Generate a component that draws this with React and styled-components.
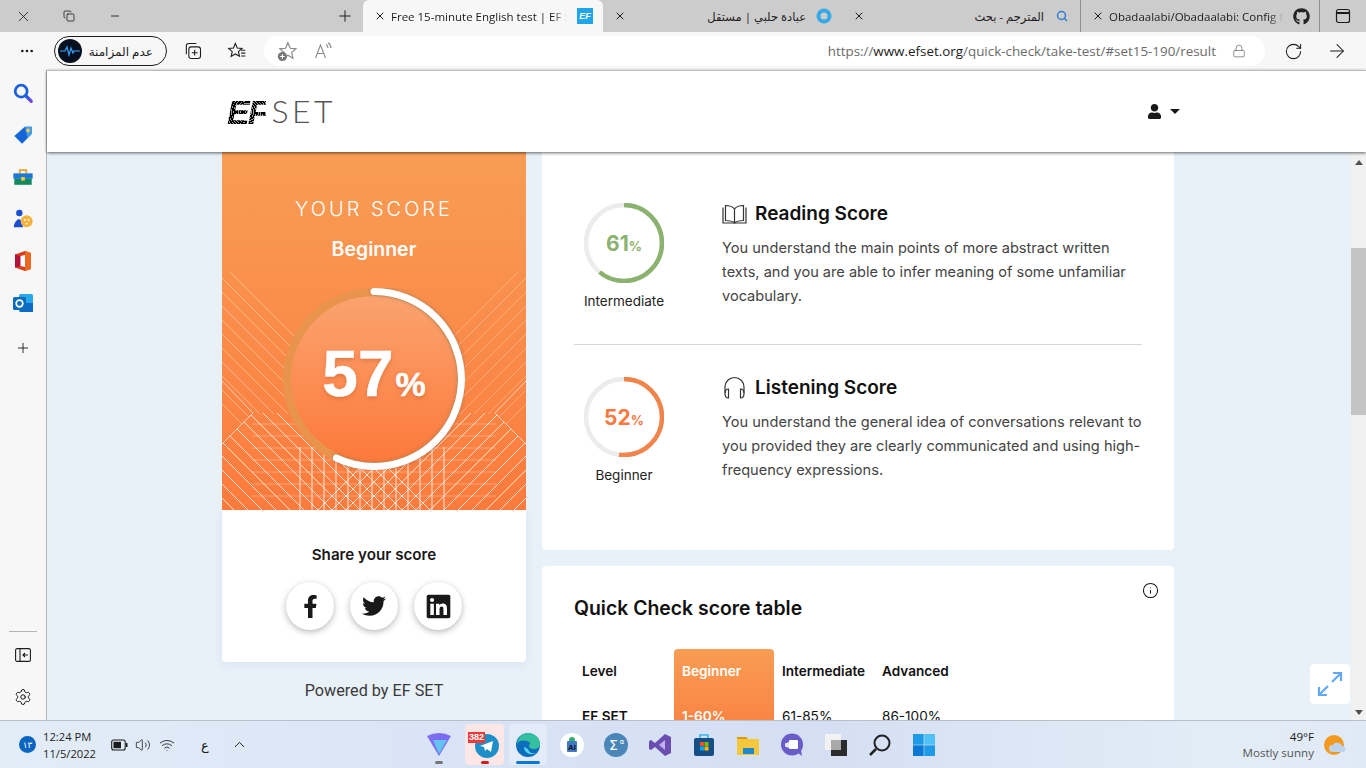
import React from 'react';
import styled, { createGlobalStyle } from 'styled-components';
import { X, Copy, Minus, Plus, MoreHorizontal, Lock, RotateCw, ArrowRight, Settings, ChevronUp, Volume2, Wifi, Search, Info } from 'lucide-react';
import { FaFacebookF, FaTwitter, FaLinkedin, FaGithub, FaUser } from 'react-icons/fa';

const GlobalStyle = createGlobalStyle`
  html, body { margin: 0; padding: 0; overflow: hidden; }
  * { box-sizing: border-box; }
`;

const UI_FONT = `"Open Sans", "DejaVu Sans", sans-serif`;
const PAGE_FONT = `Inter, "Noto Sans", sans-serif`;

// browser frame
const Screen = styled.div`
  width: 1366px;
  height: 768px;
  display: flex;
  flex-direction: column;
  overflow: hidden;
  font-family: ${UI_FONT};
  background: #f7f7f7;
`;

const TabStrip = styled.div`
  height: 32px;
  flex: none;
  background: #cccccc;
  display: flex;
  align-items: stretch;
  color: #1c1c1c;
`;

const WinButton = styled.div`
  width: ${(p) => p.$w || 46}px;
  display: flex;
  align-items: center;
  justify-content: center;
`;

const StripSpacer = styled.div`
  flex: 1;
`;

const Tab = styled.div`
  width: ${(p) => (p.$active ? 240 : 239)}px;
  display: flex;
  align-items: center;
  padding: 0 9px 0 10px;
  font-size: 11.5px;
  background: ${(p) => (p.$active ? '#f7f7f7' : 'transparent')};
  border-radius: ${(p) => (p.$active ? '6px 6px 0 0' : '0')};
  border-right: ${(p) => (p.$sep ? '1px solid #8f8f8f' : 'none')};
  background-clip: padding-box;
`;

const TabClose = styled.div`
  width: 14px;
  display: flex;
  justify-content: center;
  flex: none;
`;

const TabTitle = styled.div`
  flex: 1;
  min-width: 0;
  margin: 0 9px 0 4px;
  white-space: nowrap;
  overflow: hidden;
  direction: ${(p) => (p.$rtl ? 'rtl' : 'ltr')};
  text-align: ${(p) => (p.$rtl ? 'right' : 'left')};
  mask-image: ${(p) => (p.$rtl ? 'none' : 'linear-gradient(90deg, #000 92%, transparent)')};
`;

const TabIcon = styled.div`
  width: 18px;
  height: 18px;
  flex: none;
  display: flex;
  align-items: center;
  justify-content: center;
`;

const EfFavicon = styled.div`
  width: 16px;
  height: 16px;
  background: #1ea6e8;
  color: #fff;
  font: italic 700 9px "Liberation Sans", sans-serif;
  display: flex;
  align-items: center;
  justify-content: center;
`;

const Toolbar = styled.div`
  height: 38px;
  flex: none;
  display: flex;
  align-items: center;
  background: #f7f7f7;
  color: #1c1c1c;
`;

const ToolButton = styled.div`
  width: ${(p) => p.$w || 44}px;
  flex: none;
  display: flex;
  align-items: center;
  justify-content: center;
`;

const SyncPill = styled.div`
  width: 113px;
  height: 30px;
  border: 1px solid #1c1c1c;
  border-radius: 15px;
  display: flex;
  align-items: center;
  padding: 0 13px 0 3px;
  justify-content: space-between;
  font-size: 12px;
  flex: none;
`;

const Avatar = styled.div`
  width: 24px;
  height: 24px;
  border-radius: 50%;
  background: #06101f;
  display: flex;
  align-items: center;
  justify-content: center;
`;

const Omnibox = styled.div`
  width: 1001px;
  height: 30px;
  margin-left: 9px;
  flex: none;
  background: #fff;
  border-radius: 15px;
  display: flex;
  align-items: center;
  padding: 0 19px 0 7px;
`;

const UrlText = styled.div`
  flex: 1;
  text-align: right;
  font-size: 13.4px;
  color: #6b6b6b;
  margin-right: 16px;
  white-space: nowrap;
  b { font-weight: 400; color: #1c1c1c; }
`;

const Body = styled.div`
  flex: 1;
  min-height: 0;
  display: flex;
`;

const Sidebar = styled.div`
  width: 47px;
  flex: none;
  background: #f7f7f7;
  border-right: 1px solid #b9b9b9;
  display: flex;
  flex-direction: column;
  align-items: center;
  padding-top: 2px;
`;

const SideIcon = styled.div`
  height: ${(p) => p.$h || 42}px;
  width: 100%;
  flex: none;
  display: flex;
  align-items: center;
  justify-content: center;
`;

const SideFoot = styled.div`
  margin-top: auto;
  width: 100%;
  display: flex;
  flex-direction: column;
  align-items: center;
  padding-bottom: 2px;
`;

const SideRule = styled.div`
  width: 28px;
  height: 1px;
  background: #b5b5b5;
  margin-bottom: 2px;
`;

const Viewport = styled.div`
  flex: 1;
  min-width: 0;
  display: flex;
  flex-direction: column;
  background: #e8f0f8;
  font-family: ${PAGE_FONT};
  position: relative;
`;

// page
const SiteHeader = styled.div`
  height: 82px;
  flex: none;
  background: #fff;
  border-top: 1px solid #bdbdbd;
  box-shadow: 0 1px 3px rgba(0, 0, 0, 0.6);
  display: flex;
  align-items: center;
  justify-content: space-between;
  padding: 0 186px 0 180px;
  position: relative;
  z-index: 2;
`;

const Logo = styled.div`
  display: flex;
  align-items: center;
  gap: 5px;
`;

const LogoMark = styled.span`
  font: italic 900 34px "Liberation Sans", sans-serif;
  letter-spacing: -2px;
  line-height: 1;
  color: transparent;
  background: repeating-radial-gradient(circle at 52% 50%, #000 0 1.6px, #999 1.6px 2.3px);
  background-clip: text;
  -webkit-background-clip: text;
`;

const LogoWord = styled.span`
  font: 300 32px Lato, sans-serif;
  letter-spacing: 3.4px;
  line-height: 1;
  margin-top: -2px;
  color: #555;
`;

const UserMenu = styled.div`
  display: flex;
  align-items: center;
  gap: 8px;
  color: #1a1a1a;
`;

const Caret = styled.div`
  width: 0;
  height: 0;
  border-left: 5px solid transparent;
  border-right: 5px solid transparent;
  border-top: 5px solid #1a1a1a;
`;

const PageRow = styled.div`
  flex: 1;
  min-height: 0;
  display: flex;
`;

const Page = styled.div`
  flex: 1;
  min-width: 0;
  display: flex;
  gap: 16px;
  padding-left: 175px;
  overflow: hidden;
`;

const LeftColumn = styled.div`
  width: 304px;
  flex: none;
`;

const ScorePanel = styled.div`
  height: 358px;
  position: relative;
  overflow: hidden;
  background: linear-gradient(180deg, #f89d55, #fb7b3d);
  color: #fff;
  text-align: center;
  padding-top: 45px;
`;

const Pattern = styled.svg`
  position: absolute;
  left: 0;
  top: 0;
`;

const ScoreLabel = styled.div`
  font-size: 20px;
  font-weight: 300;
  letter-spacing: 3px;
  line-height: 24px;
  position: relative;
`;

const ScoreLevel = styled.div`
  font-size: 19.5px;
  font-weight: 600;
  line-height: 24px;
  margin-top: 16px;
  position: relative;
`;

const BigRing = styled.div`
  width: 182px;
  height: 182px;
  margin: 27px auto 0;
  position: relative;
  display: flex;
  align-items: center;
  justify-content: center;
`;

const RingSvg = styled.svg`
  position: absolute;
  left: 0;
  top: 0;
`;

const BigValue = styled.div`
  position: relative;
  font-family: "Liberation Sans", sans-serif;
  font-weight: 700;
  font-size: 64px;
  line-height: 1;
  -webkit-text-stroke: 0.5px #fff;
  text-shadow: 0 2px 4px rgba(160, 70, 20, 0.35);
  margin-top: -10px;
  span { font-size: 34px; margin-left: 2px; }
`;

const ShareCard = styled.div`
  height: 152px;
  background: #fff;
  border-radius: 0 0 4px 4px;
  box-shadow: 0 2px 10px rgba(120, 140, 170, 0.12);
  text-align: center;
  padding-top: 35px;
`;

const ShareTitle = styled.div`
  font-size: 15.2px;
  font-weight: 600;
  color: #191919;
  line-height: 20px;
`;

const ShareRow = styled.div`
  display: flex;
  justify-content: center;
  gap: 16px;
  margin-top: 17px;
`;

const ShareButton = styled.div`
  width: 48px;
  height: 48px;
  border-radius: 50%;
  background: #fff;
  box-shadow: 0 2px 6px rgba(0, 0, 0, 0.28);
  display: flex;
  align-items: center;
  justify-content: center;
  color: #191919;
`;

const Powered = styled.div`
  text-align: center;
  font: 400 16.2px Roboto, sans-serif;
  color: #3a3a3a;
  margin-top: 19px;
`;

const RightColumn = styled.div`
  width: 632px;
  flex: none;
  display: flex;
  flex-direction: column;
  gap: 16px;
`;

const Card = styled.div`
  background: #fff;
  border-radius: ${(p) => (p.$flat ? '0 0 4px 4px' : '4px')};
  padding: ${(p) => (p.$flat ? '51px 32px 0' : '30px 32px')};
  height: ${(p) => (p.$flat ? '398px' : 'auto')};
  flex: none;
  position: relative;
`;

const SkillRow = styled.div`
  display: flex;
  gap: 48px;
  height: ${(p) => p.$h}px;
`;

const Gauge = styled.div`
  width: 100px;
  flex: none;
  text-align: center;
  font-size: 13.5px;
  color: #222;
`;

const GaugeRing = styled.div`
  width: 80px;
  height: 80px;
  margin: 0 auto 10px;
  position: relative;
  display: flex;
  align-items: center;
  justify-content: center;
  font-weight: 700;
  font-size: 21px;
  color: ${(p) => p.$color};
  span { font-size: 13px; }
`;

const GaugeValue = styled.div`
  position: relative;
`;

const SkillText = styled.div`
  flex: 1;
  min-width: 0;
  margin-top: -1px;
`;

const SkillTitle = styled.div`
  display: flex;
  align-items: center;
  font-size: 19px;
  font-weight: 600;
  color: #111;
  line-height: 24px;
  margin-bottom: 10px;
`;

const TitleIcon = styled.div`
  width: 33px;
  flex: none;
  display: flex;
`;

const SkillBody = styled.div`
  font-size: 14.58px;
  line-height: 24px;
  color: #444;
`;

const Rule = styled.div`
  height: 1px;
  background: #d6d6d6;
  margin-bottom: 32px;
`;

const InfoMark = styled.div`
  position: absolute;
  right: 15px;
  top: 16px;
  color: #1a1a1a;
  display: flex;
`;

const TableTitle = styled.div`
  font-size: 19.4px;
  font-weight: 600;
  color: #111;
  line-height: 24px;
  margin-bottom: 29px;
`;

const ScoreTable = styled.div`
  display: flex;
`;

const ScoreCol = styled.div`
  width: 100px;
  padding: 0 8px;
  height: 100px;
  font-size: 13.6px;
  border-radius: 4px 4px 0 0;
  background: ${(p) => (p.$hot ? 'linear-gradient(180deg, #f89d55, #fb7b3d)' : 'transparent')};
  color: ${(p) => (p.$hot ? '#fff' : '#111')};
`;

const ScoreCell = styled.div`
  height: 45px;
  padding-top: 13px;
  line-height: 18px;
  font-weight: ${(p) => (p.$bold || p.$head ? 600 : 400)};
`;

const Scrollbar = styled.div`
  width: 15px;
  flex: none;
  background: #f1f1f1;
  display: flex;
  flex-direction: column;
  align-items: center;
  padding: 8px 0 5px;
`;

const ScrollArrow = styled.div`
  width: 0;
  height: 0;
  flex: none;
  border-left: 4px solid transparent;
  border-right: 4px solid transparent;
  border-${(p) => (p.$up ? 'bottom' : 'top')}: 5px solid #505050;
  ${(p) => (p.$up ? '' : 'margin-top: auto;')}
`;

const ScrollThumb = styled.div`
  width: 100%;
  height: 167px;
  flex: none;
  margin-top: 83px;
  background: #c4c4c4;
`;

const ExpandButton = styled.div`
  position: absolute;
  right: 16px;
  bottom: 16px;
  z-index: 3;
  width: 40px;
  height: 40px;
  background: #fff;
  border-radius: 4px;
  display: flex;
  align-items: center;
  justify-content: center;
`;

// taskbar
const Taskbar = styled.div`
  height: 48px;
  flex: none;
  display: flex;
  align-items: center;
  background: linear-gradient(90deg, #e3edf8 0%, #d8e3f6 35%, #d5dff3 60%, #e3edf7 90%, #e0e9f6 100%);
  border-top: 1px solid #b8bfca;
  color: #1c1c1c;
`;

const Tray = styled.div`
  width: 417px;
  flex: none;
  display: flex;
  align-items: center;
  padding-left: 19px;
`;

const Badge = styled.div`
  width: 17px;
  height: 17px;
  border-radius: 50%;
  background: #0a64c2;
  color: #fff;
  font-size: 9px;
  display: flex;
  align-items: center;
  justify-content: center;
`;

const Clock = styled.div`
  margin-left: 7px;
  font-size: 11.2px;
  line-height: 17px;
  width: 64px;
`;

const TrayGlyph = styled.div`
  width: ${(p) => p.$w || 24}px;
  display: flex;
  justify-content: center;
  font-size: 13px;
  margin-left: ${(p) => p.$ml || 0}px;
`;

const Dock = styled.div`
  display: flex;
  align-items: center;
  flex: 1;
`;

const DockSlot = styled.div`
  width: ${(p) => p.$w || 44}px;
  height: 41px;
  flex: none;
  margin: ${(p) => p.$m || 0};
  position: relative;
  display: flex;
  align-items: center;
  justify-content: center;
  border-radius: 4px;
  background: ${(p) => p.$bg || 'transparent'};
`;

const DockMark = styled.div`
  position: absolute;
  bottom: 1px;
  left: 50%;
  transform: translateX(-50%);
  width: ${(p) => p.$w}px;
  height: 3px;
  border-radius: 2px;
  background: ${(p) => p.$color};
`;

const CountBadge = styled.div`
  position: absolute;
  left: 3px;
  top: 8px;
  background: #f03a3a;
  color: #fff;
  font: 700 9px "Liberation Sans", sans-serif;
  padding: 0 1px;
  line-height: 11px;
`;

const Weather = styled.div`
  display: flex;
  align-items: center;
  gap: 10px;
  padding-right: 20px;
`;

const WeatherText = styled.div`
  text-align: right;
  font-size: 11.6px;
  line-height: 16px;
  color: #555;
  b { font-weight: 400; color: #1c1c1c; display: block; }
`;

// hand drawn icons
const Svg = ({ size = 22, children }) => (
  <svg width={size} height={size} viewBox="0 0 24 24" fill="none">{children}</svg>
);

const CollectionsIcon = () => (
  <Svg size={20}><rect x="7" y="7" width="14" height="14" rx="3" stroke="#1c1c1c" strokeWidth="1.3" /><path d="M14 10.5v7M10.5 14h7M4 16V6a3 3 0 0 1 3-3h9" stroke="#1c1c1c" strokeWidth="1.3" /></Svg>
);
const FavListIcon = () => (
  <Svg size={20}><path d="M10 3l2.3 5.4 5.7.5-4.3 3.8 1.3 5.6L10 15.5l-5 3 1.3-5.8L2 8.9l5.7-.5z" stroke="#1c1c1c" strokeWidth="1.3" /><path d="M17 11h5M17 14.5h5M17 18h5" stroke="#1c1c1c" strokeWidth="1.3" /></Svg>
);
const AddFavIcon = () => (
  <Svg size={22}><path d="M13 3l2.6 6 6.2.6-4.7 4.2 1.4 6.1L13 16.700l-5.500 3.200 1.400-6.100-4.700-4.200 6.200-.6z" stroke="#8a8a8a" strokeWidth="1.3" /><circle cx="7" cy="18" r="5" fill="#777" /><path d="M7 15.500v5M4.500 18h5" stroke="#fff" strokeWidth="1.2" /></Svg>
);
const ReadAloudIcon = () => (
  <svg width="18" height="18" viewBox="0 0 18 18" fill="none" stroke="#8a8a8a" strokeWidth="1.1"><path d="M1.500 16L6.500 3l5 13M3.300 11.500h6.400M12 2.500c1.500.8 2 2 2 3.500M14 .8c2 1.200 3 3 3 5.200" /></svg>
);
const SideSearch = () => (
  <Svg><defs><linearGradient id="sg" x1="0" y1="0" x2="1" y2="1"><stop offset="0" stopColor="#1565e0" /><stop offset="1" stopColor="#7a3fe8" /></linearGradient></defs><circle cx="10" cy="10" r="6.500" stroke="#1a5fe0" strokeWidth="3" /><path d="M15 15l6 6" stroke="url(#sg)" strokeWidth="3.500" strokeLinecap="round" /></Svg>
);
const SideTag = () => (
  <Svg><path d="M14 3h7.500v8L11 21.500 2.500 13z" fill="#1565d8" /><path d="M14 3h7.500v8L17 15z" fill="#3f9ef0" /><circle cx="17.500" cy="7" r="2" fill="#ffc83d" /></Svg>
);
const SideToolbox = () => (
  <Svg><path d="M8.500 8V4.500h7V8" stroke="#e2a92b" strokeWidth="2" /><rect x="1.500" y="8" width="21" height="6" fill="#1e78d6" /><rect x="2.500" y="14" width="19" height="6.500" fill="#108a5c" /><rect x="10" y="12" width="4" height="4" fill="#f6c33c" /></Svg>
);
const SideGames = () => (
  <Svg><circle cx="8" cy="5.500" r="3.500" fill="#1a4fd0" /><path d="M2 21c0-4 1.500-7 5.500-9 3 1 4.500 4 4.500 9z" fill="#1a4fd0" /><circle cx="16" cy="14.500" r="6.500" fill="#f3b33d" /><circle cx="14" cy="13" r="1" fill="#fff" /><circle cx="18" cy="13" r="1" fill="#fff" /><circle cx="16" cy="17" r="1" fill="#fff" /></Svg>
);
const SideOffice = () => (
  <Svg size={24}><path d="M4 5.500L14 2l6 2v16l-6 2L4 18.500z" fill="#d83b1d" /><path d="M14 2l6 2v16l-6 2z" fill="#eb6a1f" /><path d="M4 5.500L10 7.500v9L4 18.500z" fill="#b3123a" /><path d="M9.500 7l4.500-1v12l-4.500-1z" fill="#fff" /></Svg>
);
const SideOutlook = () => (
  <Svg size={24}><rect x="8" y="3" width="14" height="18" rx="1.500" fill="#28a8ea" /><path d="M8 12h14v9H9z" fill="#0a6cc4" /><rect x="2" y="6" width="13" height="13" rx="1.500" fill="#0f6cbd" /><circle cx="8.500" cy="12.500" r="3.300" stroke="#fff" strokeWidth="1.700" /></Svg>
);
const PanelToggle = () => (
  <svg width="16" height="14" viewBox="0 0 16 14" fill="none" stroke="#1c1c1c" strokeWidth="1.100"><rect x=".6" y=".6" width="14.800" height="12.800" rx="1.500" /><path d="M5 .6v12.800" /><path d="M13 7H8M10 5L8 7l2 2" /></svg>
);
const Headset = () => (
  <svg width="25" height="24" viewBox="0 0 25 24" fill="none" stroke="#333" strokeWidth="1.200"><path d="M3 17v-6a9.500 9.500 0 0 1 19 0v6" /><path d="M6.500 13v9C4 22 3 20 3 17.500S4 13 6.500 13zM18.500 13v9c2.500 0 3.500-2 3.500-4.500S21 13 18.500 13z" /></svg>
);
const BookIcon = () => (
  <svg width="25" height="20" viewBox="0 0 25 20" fill="none" stroke="#333" strokeWidth="1.200"><path d="M1 3.500v15.500h23V3.500" /><path d="M12.500 5C10.500 2.500 7 1.500 3.500 1.500v15c3.500 0 7 .7 9 2.500 2-1.800 5.500-2.500 9-2.500v-15C18 1.500 14.500 2.500 12.500 5zM12.500 5v14" /></svg>
);
const Battery = () => (
  <svg width="17" height="12" viewBox="0 0 17 12" fill="none"><rect x=".7" y="1" width="13.500" height="10" rx="2" stroke="#1c1c1c" strokeWidth="1.100" /><rect x="2.500" y="2.800" width="7.500" height="6.400" fill="#1c1c1c" /><rect x="15" y="4" width="1.500" height="4" fill="#1c1c1c" /></svg>
);
const ExpandIcon = () => (
  <svg width="26" height="26" viewBox="0 0 26 26" fill="none" stroke="#63a8f5" strokeWidth="2.200"><path d="M15 11L24 2M16 2h8v8M11 15l-9 9M2 16v8h8" /></svg>
);

const Ring = ({ size, r, width, value, color, track, cap, shadow }) => {
  const c = 2 * Math.PI * r;
  const mid = size / 2;
  return (
    <RingSvg width={size} height={size} viewBox={`0 0 ${size} ${size}`}>
      <circle cx={mid} cy={mid} r={r} fill="none" stroke={track} strokeWidth={width} />
      <circle
        cx={mid}
        cy={mid}
        r={r}
        fill="none"
        stroke={color}
        strokeWidth={width}
        strokeLinecap={cap}
        strokeDasharray={`${(c * value) / 100} ${c}`}
        transform={`rotate(-90 ${mid} ${mid})`}
        style={shadow ? { filter: 'drop-shadow(0 0 2px rgba(90,90,90,.45))' } : undefined}
      />
    </RingSvg>
  );
};

const range = (from, to, step) => {
  const out = [];
  for (let v = from; v <= to; v += step) out.push(v);
  return out;
};

const PanelPattern = () => (
  <Pattern width="304" height="358" viewBox="0 0 304 358" fill="none" stroke="#fff">
    <defs>
      <clipPath id="lattice"><path d="M0 292L31 261H273L304 292V358H0z" /></clipPath>
      <clipPath id="upperL"><path d="M0 120H152V262H31L0 292z" /></clipPath>
      <clipPath id="upperR"><path d="M304 120H152V262H273L304 292z" /></clipPath>
    </defs>
    <g clipPath="url(#upperL)" strokeOpacity=".36">
      {range(112, 262, 14).map((c) => <line key={c} x1="0" y1={c} x2="200" y2={c + 200} />)}
    </g>
    <g clipPath="url(#upperR)" strokeOpacity=".28">
      {range(112, 262, 14).map((c) => <line key={c} x1="304" y1={c} x2="104" y2={c + 200} />)}
    </g>
    <path d="M0 229L31 261L0 292M304 229L273 261L304 292" strokeOpacity=".6" />
    <g clipPath="url(#lattice)">
      <g strokeOpacity=".75">
        {range(150, 460, 14).map((c) => <line key={c} x1="0" y1={c} x2="304" y2={c + 304} />)}
        {range(150, 460, 14).map((c) => <line key={c} x1="304" y1={c} x2="0" y2={c + 304} />)}
      </g>
      <g strokeOpacity=".3">
        {range(272, 345, 12).map((y) => <line key={y} x1="30" y1={y} x2="274" y2={y} />)}
      </g>
      <g strokeOpacity=".8">
        {range(78, 226, 12).map((x) => <line key={x} x1={x} y1="295" x2={x} y2="358" />)}
      </g>
    </g>
  </Pattern>
);

const skills = [
  {
    title: 'Reading Score',
    icon: <BookIcon />,
    value: 61,
    level: 'Intermediate',
    color: '#8bb26f',
    ring: '#8bb26f',
    h: 141,
    text: 'You understand the main points of more abstract written texts, and you are able to infer meaning of some unfamiliar vocabulary.',
  },
  {
    title: 'Listening Score',
    icon: <Headset />,
    value: 52,
    level: 'Beginner',
    color: '#f9783f',
    ring: '#f1844a',
    h: 140,
    text: 'You understand the general idea of conversations relevant to you provided they are clearly communicated and using high-frequency expressions.',
  },
];

const table = [
  { head: 'Level', value: 'EF SET', bold: true },
  { head: 'Beginner', value: '1-60%', hot: true, bold: true },
  { head: 'Intermediate', value: '61-85%' },
  { head: 'Advanced', value: '86-100%' },
];

const App = () => (
  <Screen>
    <GlobalStyle />
    <TabStrip>
      <WinButton><X size={17} strokeWidth={1.2} /></WinButton>
      <WinButton><Copy size={12} strokeWidth={1.6} /></WinButton>
      <WinButton><Minus size={12} strokeWidth={1.8} /></WinButton>
      <StripSpacer />
      <WinButton $w={36}><Plus size={18} strokeWidth={1.3} /></WinButton>
      <Tab $active>
        <TabClose><X size={12} strokeWidth={2} /></TabClose>
        <TabTitle>Free 15-minute English test | EF SET</TabTitle>
        <TabIcon><EfFavicon>EF</EfFavicon></TabIcon>
      </Tab>
      <Tab>
        <TabClose><X size={12} strokeWidth={2} /></TabClose>
        <TabTitle $rtl>عبادة حلبي | مستقل</TabTitle>
        <TabIcon><svg width="16" height="16" viewBox="0 0 16 16"><circle cx="8" cy="8" r="5.500" fill="none" stroke="#35a9e8" strokeWidth="4" /></svg></TabIcon>
      </Tab>
      <Tab $sep>
        <TabClose><X size={12} strokeWidth={2} /></TabClose>
        <TabTitle $rtl>المترجم - بحث</TabTitle>
        <TabIcon><Search size={12} strokeWidth={3} color="#2f7fd0" /></TabIcon>
      </Tab>
      <Tab $sep>
        <TabClose><X size={12} strokeWidth={2} /></TabClose>
        <TabTitle>Obadaalabi/Obadaalabi: Config files for my GitHub</TabTitle>
        <TabIcon><FaGithub size={17} color="#222" /></TabIcon>
      </Tab>
      <WinButton>
        <svg width="16" height="16" viewBox="0 0 16 16" fill="none" stroke="#1c1c1c" strokeWidth="1.200"><rect x="1.500" y="1.500" width="13" height="13" rx="2" /><path d="M1.500 5h13" strokeWidth="2" /></svg>
      </WinButton>
    </TabStrip>
    <Toolbar>
      <ToolButton $w={54}><MoreHorizontal size={16} /></ToolButton>
      <SyncPill>
        <Avatar>
          <svg width="20" height="12" viewBox="0 0 20 12" fill="none"><path d="M0 6h5l2-4 2 8 2-7 2 5 1-2h6" stroke="#3aa0ff" strokeWidth="1.200" /></svg>
        </Avatar>
        <span>عدم المزامنة</span>
      </SyncPill>
      <ToolButton $w={52}><CollectionsIcon /></ToolButton>
      <ToolButton $w={36}><FavListIcon /></ToolButton>
      <Omnibox>
        <ToolButton $w={32}><AddFavIcon /></ToolButton>
        <ToolButton $w={40}><ReadAloudIcon /></ToolButton>
        <UrlText>https://<b>www.efset.org</b>/quick-check/take-test/#set15-190/result</UrlText>
        <Lock size={14} strokeWidth={1.1} color="#555" />
      </Omnibox>
      <ToolButton $w={56}><RotateCw size={19} strokeWidth={1.3} /></ToolButton>
      <ToolButton $w={32}><ArrowRight size={22} strokeWidth={1.1} /></ToolButton>
    </Toolbar>
    <Body>
      <Sidebar>
        <SideIcon><SideSearch /></SideIcon>
        <SideIcon><SideTag /></SideIcon>
        <SideIcon><SideToolbox /></SideIcon>
        <SideIcon><SideGames /></SideIcon>
        <SideIcon><SideOffice /></SideIcon>
        <SideIcon><SideOutlook /></SideIcon>
        <SideIcon $h={48}><Plus size={16} strokeWidth={1.2} /></SideIcon>
        <SideFoot>
          <SideRule />
          <SideIcon><PanelToggle /></SideIcon>
          <SideIcon><Settings size={18} strokeWidth={1.2} /></SideIcon>
        </SideFoot>
      </Sidebar>
      <Viewport>
        <SiteHeader>
          <Logo>
            <LogoMark>EF</LogoMark>
            <LogoWord>SET</LogoWord>
          </Logo>
          <UserMenu>
            <FaUser size={15} />
            <Caret />
          </UserMenu>
        </SiteHeader>
        <PageRow>
          <Page>
            <LeftColumn>
              <ScorePanel>
                <PanelPattern />
                <ScoreLabel>YOUR SCORE</ScoreLabel>
                <ScoreLevel>Beginner</ScoreLevel>
                <BigRing>
                  <RingSvg width="182" height="182" viewBox="0 0 182 182">
                    <defs>
                      <linearGradient id="bigFill" x1="0" y1="0" x2="0" y2="1">
                        <stop offset="0" stopColor="#fba36e" />
                        <stop offset="1" stopColor="#fc793b" />
                      </linearGradient>
                    </defs>
                    <circle cx="91" cy="91" r="91" fill="#e9944d" />
                    <circle cx="91" cy="91" r="83" fill="url(#bigFill)" />
                  </RingSvg>
                  <Ring size={182} r={87.500} width={7} value={57} color="#fff" track="transparent" cap="round" shadow />
                  <BigValue>57<span>%</span></BigValue>
                </BigRing>
              </ScorePanel>
              <ShareCard>
                <ShareTitle>Share your score</ShareTitle>
                <ShareRow>
                  <ShareButton><FaFacebookF size={23} /></ShareButton>
                  <ShareButton><FaTwitter size={24} /></ShareButton>
                  <ShareButton><FaLinkedin size={27} /></ShareButton>
                </ShareRow>
              </ShareCard>
              <Powered>Powered by EF SET</Powered>
            </LeftColumn>
            <RightColumn>
              <Card $flat>
                {skills.map((s, i) => (
                  <React.Fragment key={s.title}>
                    <SkillRow $h={s.h}>
                      <Gauge>
                        <GaugeRing $color={s.color}>
                          <Ring size={80} r={38} width={4.5} value={s.value} color={s.ring} track="#ececec" cap="butt" />
                          <GaugeValue>{s.value}<span>%</span></GaugeValue>
                        </GaugeRing>
                        {s.level}
                      </Gauge>
                      <SkillText>
                        <SkillTitle><TitleIcon>{s.icon}</TitleIcon>{s.title}</SkillTitle>
                        <SkillBody>{s.text}</SkillBody>
                      </SkillText>
                    </SkillRow>
                    {i === 0 && <Rule />}
                  </React.Fragment>
                ))}
              </Card>
              <Card>
                <InfoMark><Info size={17} strokeWidth={1.5} /></InfoMark>
                <TableTitle>Quick Check score table</TableTitle>
                <ScoreTable>
                  {table.map((col) => (
                    <ScoreCol key={col.head} $hot={col.hot}>
                      <ScoreCell $head>{col.head}</ScoreCell>
                      <ScoreCell $bold={col.bold}>{col.value}</ScoreCell>
                    </ScoreCol>
                  ))}
                </ScoreTable>
              </Card>
            </RightColumn>
          </Page>
          <Scrollbar>
            <ScrollArrow $up />
            <ScrollThumb />
            <ScrollArrow />
          </Scrollbar>
        </PageRow>
        <ExpandButton><ExpandIcon /></ExpandButton>
      </Viewport>
    </Body>
    <Taskbar>
      <Tray>
        <Badge>١٣</Badge>
        <Clock>12:24 PM<br />11/5/2022</Clock>
        <TrayGlyph><Battery /></TrayGlyph>
        <TrayGlyph><Volume2 size={16} strokeWidth={1.2} /></TrayGlyph>
        <TrayGlyph><Wifi size={16} strokeWidth={1.3} /></TrayGlyph>
        <TrayGlyph $ml={14}>ع</TrayGlyph>
        <TrayGlyph $ml={10}><ChevronUp size={17} strokeWidth={1.4} /></TrayGlyph>
      </Tray>
      <Dock>
        <DockSlot>
          <svg width="26" height="26" viewBox="0 0 26 26"><path d="M1 4q12-6 24 0L13 24z" fill="#7d6cf0" /><path d="M7 8h14L13 22z" fill="#62c4ee" /></svg>
          <DockMark $w={8} $color="#777" />
        </DockSlot>
        <DockSlot $w={39} $m="0 5px 0 4px" $bg="#fce6e6">
          <svg width="24" height="24" viewBox="0 0 24 24" style={{ marginLeft: 4, marginTop: 2 }}><circle cx="12" cy="12" r="12" fill="#1f8fc9" /><path d="M5 12l13-5-2 11-4-3-2 2-1-4z" fill="#fff" /></svg>
          <CountBadge>382</CountBadge>
          <DockMark $w={8} $color="#cc2020" />
        </DockSlot>
        <DockSlot $w={38} $m="0 3px 0 0" $bg="#e3ebf8">
          <svg width="26" height="26" viewBox="0 0 26 26"><circle cx="13" cy="13" r="12" fill="#0d6ebd" /><path d="M2 12C3 4 9 1 13 1c6 0 12 5 12 11 0 3-3 5-6 5s-5-1-5-3c0-1 1-2 1-3-1-3-11-4-13 1z" fill="#35c1a0" /><path d="M9 15c0 6 7 9 12 6-5 1-7-1-8-4z" fill="#5ad1f0" /></svg>
          <DockMark $w={24} $color="#0a78d4" />
        </DockSlot>
        <DockSlot>
          <svg width="24" height="24" viewBox="0 0 24 24"><circle cx="12" cy="12" r="12" fill="#fff" /><circle cx="12" cy="7" r="3" fill="#2fae6a" /><rect x="7" y="8" width="10" height="11" rx="1" fill="#3f78c8" /><text x="12" y="17" textAnchor="middle" fontSize="8" fontWeight="700" fill="#111" fontFamily="Liberation Sans">AI</text></svg>
        </DockSlot>
        <DockSlot>
          <svg width="24" height="24" viewBox="0 0 24 24"><circle cx="12" cy="12" r="12" fill="#4b86b8" /><text x="9.500" y="17" textAnchor="middle" fontSize="14" fill="#fff" fontFamily="DejaVu Sans">Σ</text><text x="18" y="11" textAnchor="middle" fontSize="7" fill="#fff" fontFamily="DejaVu Sans">α</text></svg>
        </DockSlot>
        <DockSlot>
          <svg width="24" height="24" viewBox="0 0 24 24"><path d="M17 1l6 3v16l-6 3L7 14l-4 3-2-1V8l2-1 4 3z" fill="#6a4fb0" /><path d="M17 7v10l-6-5z" fill="#c3b0ea" /></svg>
        </DockSlot>
        <DockSlot>
          <svg width="24" height="24" viewBox="0 0 24 24"><path d="M8 6V2h8v4" fill="none" stroke="#35b8e8" strokeWidth="1.600" /><rect x="2" y="5" width="20" height="18" rx="2" fill="#154f85" /><rect x="8" y="9" width="4" height="4" fill="#f25022" /><rect x="12.500" y="9" width="4" height="4" fill="#7fba00" /><rect x="8" y="13.500" width="4" height="4" fill="#00a4ef" /><rect x="12.500" y="13.500" width="4" height="4" fill="#ffb900" /></svg>
        </DockSlot>
        <DockSlot>
          <svg width="24" height="24" viewBox="0 0 24 24"><path d="M1 4h9l2 2h11v16H1z" fill="#f5c73d" /><path d="M1 4h9l2 2H1z" fill="#d99a10" /><rect x="7" y="15" width="11" height="6" fill="#1e88c9" /></svg>
        </DockSlot>
        <DockSlot>
          <svg width="24" height="24" viewBox="0 0 24 24"><circle cx="12" cy="11.500" r="11" fill="#6a5cc8" /><path d="M18 20l4 3-1-6z" fill="#6a5cc8" /><rect x="9" y="7" width="9" height="9" rx="1" fill="#fff" /><path d="M9 9l-4 1.500v3L9 15z" fill="#e6e6f8" /></svg>
        </DockSlot>
        <DockSlot>
          <svg width="24" height="24" viewBox="0 0 24 24"><rect x="7" y="7" width="16" height="16" fill="#2b2b2b" /><rect x="1" y="1" width="16" height="16" fill="#f2f2f2" /><rect x="7" y="7" width="10" height="10" fill="#a9a9a9" /></svg>
        </DockSlot>
        <DockSlot>
          <svg width="24" height="24" viewBox="0 0 24 24" fill="none"><circle cx="14" cy="10" r="7.500" stroke="#222" strokeWidth="2" /><path d="M8 16l-6 6" stroke="#222" strokeWidth="2.500" /></svg>
        </DockSlot>
        <DockSlot>
          <svg width="24" height="24" viewBox="0 0 24 24"><rect x="1" y="1" width="10.700" height="10.700" fill="#1e9ae6" /><rect x="12.300" y="1" width="10.700" height="10.700" fill="#52c1f5" /><rect x="1" y="12.300" width="10.700" height="10.700" fill="#0a78d4" /><rect x="12.300" y="12.300" width="10.700" height="10.700" fill="#1e9ae6" /></svg>
        </DockSlot>
      </Dock>
      <Weather>
        <WeatherText><b>49°F</b>Mostly sunny</WeatherText>
        <svg width="22" height="24" viewBox="0 0 22 24"><circle cx="10" cy="12" r="10" fill="#f39a1e" /><path d="M8 19a3.500 3.500 0 0 1 1-7 5 5 0 0 1 9 1 3 3 0 0 1 1 6z" fill="#bcd4ee" /></svg>
      </Weather>
    </Taskbar>
  </Screen>
);

export default App;
